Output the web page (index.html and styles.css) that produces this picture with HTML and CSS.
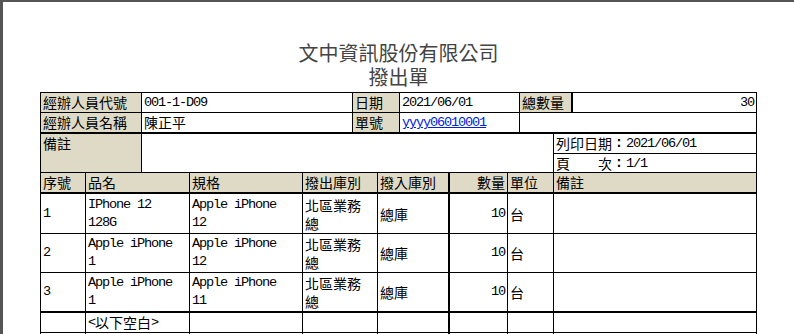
FILE: index.html
```html
<!DOCTYPE html>
<html lang="zh-Hant">
<head>
<meta charset="utf-8">
<title>撥出單</title>
<link rel="stylesheet" href="styles.css">
</head>
<body>
<div class="frame">
  <div class="sheet">
    <div class="title">
      <div>文中資訊股份有限公司</div>
      <div>撥出單</div>
    </div>

    <div class="grid info">
      <div class="c lbl">經辦人員代號</div>
      <div class="c"><span class="en">001-1-D09</span></div>
      <div class="c lbl">日期</div>
      <div class="c"><span class="en">2021/06/01</span></div>
      <div class="c lbl r2">總數量</div>
      <div class="c end"><span class="en">30</span></div>
      <div class="c lbl">經辦人員名稱</div>
      <div class="c">陳正平</div>
      <div class="c lbl">單號</div>
      <div class="c"><a class="en link" href="#">yyyy06010001</a></div>
      <div class="c span2"></div>
    </div>

    <div class="grid memo">
      <div class="c lbl rspan top">備註</div>
      <div class="c rspan"></div>
      <div class="c">列印日期<span class="colon">:</span><span class="en">2021/06/01</span></div>
      <div class="c">頁　　次<span class="colon">:</span><span class="en">1/1</span></div>
    </div>

    <div class="grid hdr">
      <div class="c lbl">序號</div>
      <div class="c lbl">品名</div>
      <div class="c lbl">規格</div>
      <div class="c lbl">撥出庫別</div>
      <div class="c lbl r2">撥入庫別</div>
      <div class="c lbl end">數量</div>
      <div class="c lbl">單位</div>
      <div class="c lbl">備註</div>
    </div>

    <div class="grid rows">
      <div class="c"><span class="en">1</span></div>
      <div class="c"><span class="en">IPhone 12<br>128G</span></div>
      <div class="c"><span class="en">Apple iPhone<br>12</span></div>
      <div class="c"><span>北區業務<br>總</span></div>
      <div class="c r2">總庫</div>
      <div class="c end"><span class="en">10</span></div>
      <div class="c">台</div>
      <div class="c"></div>

      <div class="c"><span class="en">2</span></div>
      <div class="c"><span class="en">Apple iPhone<br>1</span></div>
      <div class="c"><span class="en">Apple iPhone<br>12</span></div>
      <div class="c"><span>北區業務<br>總</span></div>
      <div class="c r2">總庫</div>
      <div class="c end"><span class="en">10</span></div>
      <div class="c">台</div>
      <div class="c"></div>

      <div class="c"><span class="en">3</span></div>
      <div class="c"><span class="en">Apple iPhone<br>1</span></div>
      <div class="c"><span class="en">Apple iPhone<br>11</span></div>
      <div class="c"><span>北區業務<br>總</span></div>
      <div class="c r2">總庫</div>
      <div class="c end"><span class="en">10</span></div>
      <div class="c">台</div>
      <div class="c"></div>
    </div>

    <div class="grid blank">
      <div class="c"></div>
      <div class="c"><span class="en">&lt;</span>以下空白<span class="en">&gt;</span></div>
      <div class="c"></div>
      <div class="c"></div>
      <div class="c r2"></div>
      <div class="c"></div>
      <div class="c"></div>
      <div class="c"></div>

      <div class="c"></div>
      <div class="c"></div>
      <div class="c"></div>
      <div class="c"></div>
      <div class="c r2"></div>
      <div class="c"></div>
      <div class="c"></div>
      <div class="c"></div>
    </div>
  </div>
</div>
</body>
</html>
```

FILE: styles.css
```css
* {
  box-sizing: border-box;
}

html,
body {
  margin: 0;
  padding: 0;
  background: #fff;
}

body {
  width: 794px;
  height: 334px;
  overflow: hidden;
  font-family: "Noto Sans CJK TC", "Noto Sans CJK SC", sans-serif;
  color: #000;
}

.frame {
  height: 334px;
  border-left: 3px solid #555;
  border-top: 2px solid #555;
  padding: 39px 0 0 37px;
}

.sheet {
  width: 717px;
}

.title {
  text-align: center;
  font-size: 20px;
  line-height: 24px;
  color: #444;
  margin-bottom: 3px;
}

.grid {
  display: grid;
  border-left: 1px solid #000;
  font-size: 14px;
  line-height: 19px;
}

.info {
  grid-template-columns: 101px 211px 47px 120px 53px 184px;
  grid-template-rows: 20px 20px;
  border-top: 1px solid #000;
  border-bottom: 1px solid #000;
}

.memo {
  grid-template-columns: 101px 412px 203px;
  grid-template-rows: 20px 19px;
}

.hdr,
.rows,
.blank {
  grid-template-columns: 45px 104px 113px 75px 72px 58px 46px 203px;
}

.hdr {
  grid-template-rows: 20px;
  border-bottom: 1px solid #000;
}

.rows {
  grid-template-rows: 40px 39px 39px;
  border-bottom: 1px solid #000;
  line-height: 18px;
}

.blank {
  grid-template-rows: 20px 20px;
}

.c {
  border-right: 1px solid #000;
  border-bottom: 1px solid #000;
  padding: 0 2px;
  display: flex;
  align-items: center;
  white-space: nowrap;
  overflow: hidden;
}

.lbl {
  background: #dedac6;
}

.top {
  align-items: flex-start;
}

.end {
  justify-content: flex-end;
}

.r2 {
  border-right-width: 2px;
}

.span2 {
  grid-column: span 2;
}

.rspan {
  grid-row: span 2;
}

.colon {
  width: 14px;
  text-align: center;
  font-family: "Liberation Mono", monospace;
  font-size: 14px;
  font-weight: bold;
}

.en {
  font-family: "Liberation Mono", monospace;
  font-size: 13.6px;
  letter-spacing: -1.15px;
}

.link {
  color: #0022dd;
  text-decoration: underline;
}
```
